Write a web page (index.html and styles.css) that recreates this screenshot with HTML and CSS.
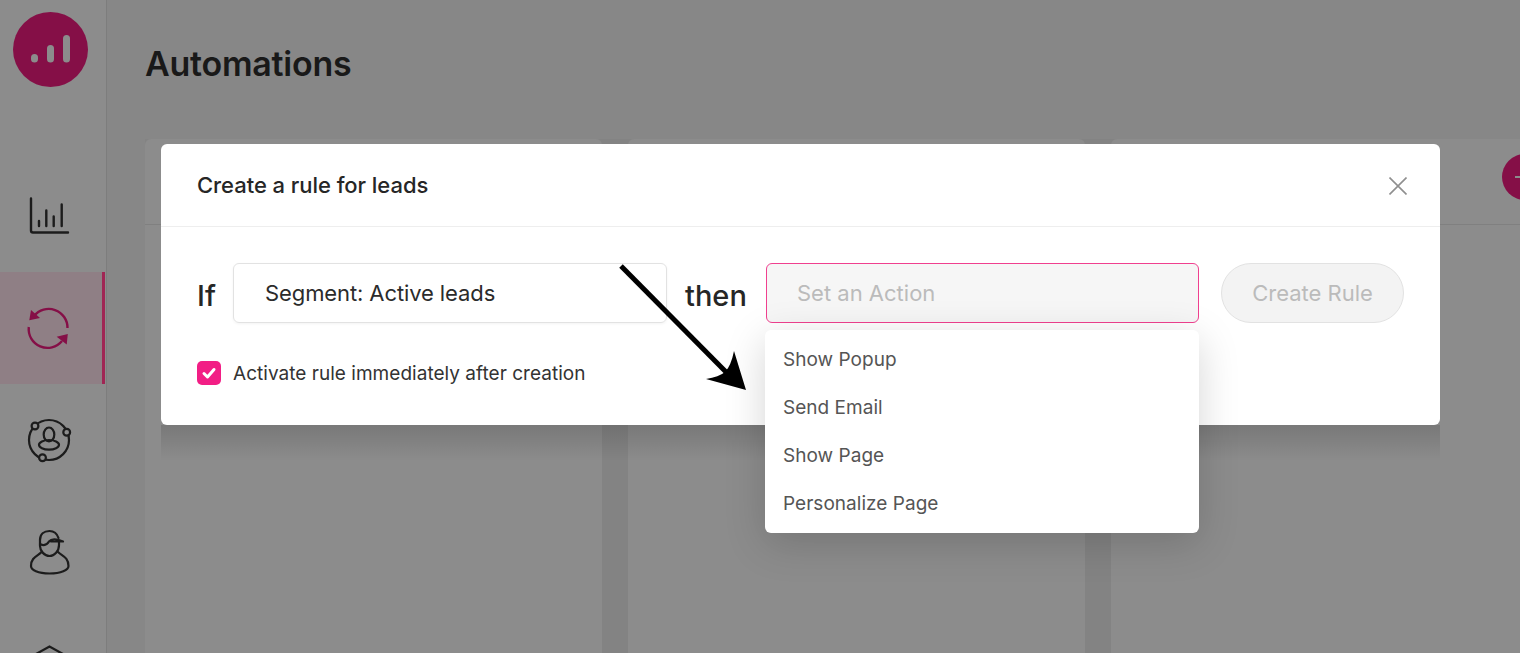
FILE: index.html
```html
<!DOCTYPE html>
<html>
<head>
    <meta http-equiv="Content-Type" content="text/html; charset=UTF-8">
    <title>Automations</title>
    <link rel="stylesheet" href="styles.css">
</head>
<body>
    <div class="sidebar">
        <svg class="logo" viewBox="0 0 75 75">
            <circle cx="37.5" cy="37.5" r="37.5" fill="#850f47"/>
            <g stroke="#8c8c8c" stroke-width="7" stroke-linecap="round">
                <path d="M21.5 45.5v1.5"/>
                <path d="M37.5 36.5v10.5"/>
                <path d="M53.5 26.5v20.5"/>
            </g>
        </svg>
        <div class="nav">
            <a class="nav-item">
                <svg viewBox="25 192 48 48" fill="none" stroke="#1c1c1c" stroke-linecap="round">
                    <path d="M31 198.500V230.500Q31 232.500 33 232.500H68" stroke-width="2.400"/>
                    <path d="M39 221V226M46.300 210.500V226M53.700 216.500V226M61.700 204.500V226" stroke-width="2.400"/>
                </svg>
            </a>
            <a class="nav-item active">
                <svg viewBox="25 304 48 48" fill="none" stroke="#850f47" stroke-width="2.400">
                    <path d="M34 316A18.800 18.800 0 0 1 67.500 328"/>
                    <path d="M28.800 327A18.800 18.800 0 0 0 62 341"/>
                    <path d="M31 310L29.300 320.300L40 318Z" fill="#850f47" stroke="none"/>
                    <path d="M67.800 334L66.700 344.500L56.700 336.700Z" fill="#850f47" stroke="none"/>
                </svg>
            </a>
            <a class="nav-item">
                <svg viewBox="25 416 48 48" fill="none" stroke="#1c1c1c" stroke-width="2.200">
                    <circle cx="49" cy="440" r="20"/>
                    <ellipse cx="49" cy="434.500" rx="5.300" ry="7"/>
                    <ellipse cx="49" cy="444.800" rx="10" ry="4.800"/>
                    <circle cx="35" cy="426" r="3.400" fill="#8c8c8c"/>
                    <circle cx="66.700" cy="432.300" r="3.400" fill="#8c8c8c"/>
                    <circle cx="42.500" cy="457.700" r="3.400" fill="#8c8c8c"/>
                </svg>
            </a>
            <a class="nav-item">
                <svg viewBox="25 528 48 48" fill="none" stroke="#1c1c1c" stroke-width="2.200" stroke-linejoin="round" stroke-linecap="round">
                    <path d="M41.500 552C38 556 31 557 31 566C31 570 38 573.500 49.500 573.500C61 573.500 68.500 570 68.500 566C68.500 557 62 556 58 552"/>
                    <path d="M40 540C40 534 44 531 49.500 531C54 531 57 533.500 58.500 538"/>
                    <path d="M40 540V546C40 551 44.500 556 49.500 556C54.500 556 59 551 59 545V541"/>
                    <path d="M40 544C44 546 47 545 49 541.500C51 539 56 538.500 63 541.500H51"/>
                </svg>
            </a>
            <a class="nav-item">
                <svg viewBox="25 640 48 48" fill="none" stroke="#1c1c1c" stroke-width="2.200">
                    <path d="M36 654L49.500 646.500L63 654V676"/>
                </svg>
            </a>
        </div>
    </div>

    <div class="main">
        <h1>Automations</h1>
        <div class="columns">
            <div class="column"><div class="column-head"></div></div>
            <div class="column"><div class="column-head"></div></div>
            <div class="column"><div class="column-head"><span class="add-btn"></span></div></div>
        </div>
    </div>

    <div class="modal">
        <div class="modal-head">
            <h2>Create a rule for leads</h2>
            <svg class="close" viewBox="0 0 18 18" fill="none" stroke="#8f8f8f" stroke-width="1.600">
                <path d="M0.500 0.500L17.500 17.500M17.500 0.500L0.500 17.500"/>
            </svg>
        </div>
        <div class="modal-body">
            <div class="rule-row">
                <span class="word word-if">If</span>
                <div class="field">Segment: Active leads</div>
                <span class="word word-then">then</span>
                <div class="action-wrap">
                    <div class="field field-action">Set an Action</div>
                    <div class="dropdown-content">
                        <a>Show Popup</a>
                        <a>Send Email</a>
                        <a>Show Page</a>
                        <a>Personalize Page</a>
                    </div>
                </div>
                <button class="create-btn">Create Rule</button>
            </div>
            <label class="check-row">
                <span class="checkbox">
                    <svg viewBox="0 0 24 24" fill="none" stroke="#fff" stroke-width="3" stroke-linecap="round" stroke-linejoin="round">
                        <path d="M7 12.500L10.500 16L17 8.500"/>
                    </svg>
                </span>
                Activate rule immediately after creation
            </label>
        </div>
    </div>

    <!-- annotation arrow drawn on top of the screenshot -->
    <svg class="arrow" viewBox="0 0 1520 653">
        <path d="M621 266L727 373" stroke="#000" stroke-width="5" fill="none"/>
        <path d="M746 390L734 351Q731 366 725 372Q719 377 706 379Z" fill="#000"/>
    </svg>
</body>
</html>
```

FILE: styles.css
```css
/* colours are the dimmed ones, the page sits under the modal backdrop */
html {
    overflow: hidden;
}
body {
    margin: 0;
    width: 1520px;
    height: 653px;
    overflow: hidden;
    display: flex;
    background-color: #878787;
    color: #1c1c1c;
    font-family: Inter, "Liberation Sans", sans-serif;
}
.sidebar {
    width: 106px;
    height: 653px;
    overflow: hidden;
    flex-shrink: 0;
    background-color: #8c8c8c;
    border-right: 1px solid #7d7d7d;
}
.logo {
    display: block;
    width: 75px;
    height: 75px;
    margin: 12px 0 73px 13px;
}
.nav-item {
    display: flex;
    align-items: center;
    width: 80px;
    height: 112px;
    padding-left: 25px;
}
.nav-item svg {
    width: 48px;
    height: 48px;
}
.nav-item.active {
    background-color: #8f7f85;
    border-right: 3px solid #a02654;
    width: 77px;
}
.main {
    flex: 1;
    min-width: 0;
    padding-left: 38px;
}
h1 {
    margin: 43px 0 54px;
    font-size: 34px;
    line-height: 42px;
    font-weight: 600;
    letter-spacing: -0.25px;
    color: #191919;
}
.columns {
    display: grid;
    grid-template-columns: repeat(3, 457px);
    gap: 26px;
    height: 514px;
    background-color: #838383;
}
.column {
    background-color: #8c8c8c;
    border-radius: 6px 6px 0 0;
}
.column-head {
    display: flex;
    justify-content: flex-end;
    align-items: flex-start;
    box-sizing: border-box;
    height: 86px;
    padding: 15px 20px 0 0;
    border-bottom: 1px solid #808080;
}
.add-btn {
    position: relative;
    width: 46px;
    height: 46px;
    border-radius: 50%;
    background-color: #850f47;
}
.add-btn::before {
    content: "";
    position: absolute;
    left: 13px;
    top: 22px;
    width: 20px;
    height: 2px;
    background-color: #8c8c8c;
}
.modal {
    position: absolute;
    left: 161px;
    top: 144px;
    width: 1279px;
    background-color: white;
    border-radius: 6px;
}
.modal::after {
    content: "";
    position: absolute;
    left: 0;
    right: 0;
    top: 100%;
    height: 36px;
    background: linear-gradient(rgba(0,0,0,0.14), rgba(0,0,0,0));
}
.modal-head {
    display: flex;
    justify-content: space-between;
    align-items: center;
    height: 82px;
    padding: 0 33px 0 36px;
    border-bottom: 1px solid #eeeeee;
}
.modal-head h2 {
    margin: 0;
    font-size: 22px;
    font-weight: 500;
    letter-spacing: -0.05px;
    color: #262626;
}
.close {
    width: 18px;
    height: 18px;
    margin-top: 2px;
}
.modal-body {
    padding: 36px 36px 40px;
}
.rule-row {
    display: flex;
    align-items: center;
    height: 60px;
}
.word {
    padding-top: 5px;
    font-size: 29px;
    font-weight: 500;
    color: #262626;
}
.word-if {
    width: 36px;
}
.word-then {
    width: 99px;
    padding-left: 18px;
    box-sizing: border-box;
}
.field {
    box-sizing: border-box;
    width: 434px;
    height: 60px;
    line-height: 58px;
    padding-left: 31px;
    border: 1px solid #e2e2e2;
    border-radius: 6px;
    font-size: 22px;
    letter-spacing: -0.1px;
    color: #2b2b2b;
    box-shadow: 0 1px 3px rgba(0,0,0,0.05);
}
.action-wrap {
    position: relative;
    width: 433px;
}
.field-action {
    width: 100%;
    padding-left: 30px;
    border-color: #f0408f;
    background-color: #f6f6f6;
    color: #bbbbbb;
    letter-spacing: 0;
    box-shadow: none;
}
.dropdown-content {
    position: absolute;
    left: -1px;
    top: 67px;
    width: 434px;
    padding: 5px 0 6px;
    background-color: white;
    border-radius: 6px;
    box-shadow: 0 10px 40px rgba(0,0,0,0.17);
    z-index: 1;
}
.dropdown-content a {
    display: block;
    height: 48px;
    line-height: 50px;
    padding-left: 18px;
    font-size: 19px;
    letter-spacing: 0.03px;
    color: #555555;
}
.create-btn {
    width: 183px;
    height: 60px;
    margin-left: 22px;
    background-color: #f3f3f3;
    border: 1px solid #e2e2e2;
    border-radius: 30px;
    font-family: inherit;
    font-size: 22px;
    color: #bbbbbb;
}
.check-row {
    display: flex;
    align-items: center;
    gap: 12px;
    margin-top: 38px;
    height: 24px;
    font-size: 19px;
    letter-spacing: 0.03px;
    color: #333333;
}
.checkbox {
    width: 24px;
    height: 24px;
    border-radius: 5px;
    background-color: #f21e85;
}
.checkbox svg {
    display: block;
}
.arrow {
    position: absolute;
    left: 0;
    top: 0;
    width: 1520px;
    height: 653px;
    z-index: 2;
}
```
